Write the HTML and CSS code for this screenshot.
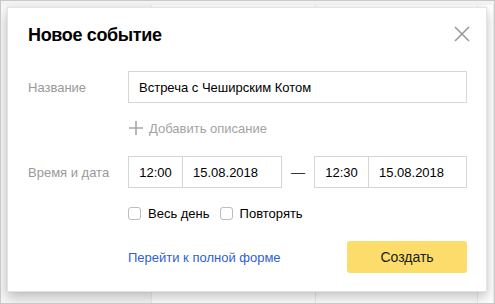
FILE: index.html
```html
<!DOCTYPE html>
<html lang="ru">
<head>
<meta charset="utf-8">
<link rel="stylesheet" href="styles.css">
</head>
<body>
<div class="screen">
  <div class="backdrop">
    <div class="col c1"></div>
    <div class="col c2"></div>
    <div class="col c3"></div>
    <div class="col c4"></div>
  </div>
  <div class="modal">
    <div class="modal-head">
      <h1 class="title">Новое событие</h1>
      <button class="close" aria-label="Закрыть">
        <svg width="16" height="16" viewBox="0 0 16 16"><path d="M1 1L15 15M15 1L1 15" stroke="#9a9a9a" stroke-width="1.6" fill="none"/></svg>
      </button>
    </div>
    <div class="form">
      <div class="row row-name">
        <div class="label">Название</div>
        <div class="field input-wide">Встреча с Чеширским Котом</div>
      </div>
      <div class="row row-desc">
        <div class="label"></div>
        <div class="add-desc">
          <svg width="14" height="14" viewBox="0 0 14 14"><path d="M7 0V14M0 7H14" stroke="#a6a6a6" stroke-width="1.6" fill="none"/></svg>
          <span>Добавить описание</span>
        </div>
      </div>
      <div class="row row-time">
        <div class="label">Время и дата</div>
        <div class="range">
          <div class="pair">
            <div class="field time">12:00</div>
            <div class="field date">15.08.2018</div>
          </div>
          <div class="dash">—</div>
          <div class="pair">
            <div class="field time">12:30</div>
            <div class="field date">15.08.2018</div>
          </div>
        </div>
      </div>
      <div class="row row-checks">
        <div class="label"></div>
        <div class="checks">
          <label class="check"><span class="box"></span>Весь день</label>
          <label class="check"><span class="box"></span>Повторять</label>
        </div>
      </div>
      <div class="row row-foot">
        <div class="label"></div>
        <div class="foot">
          <a class="link" href="#">Перейти к полной форме</a>
          <button class="create">Создать</button>
        </div>
      </div>
    </div>
  </div>
</div>
</body>
</html>
```

FILE: styles.css
```css
* { box-sizing: border-box; }
html, body { margin: 0; padding: 0; }
body {
  width: 495px;
  height: 304px;
  overflow: hidden;
  font-family: "Liberation Sans", Arial, sans-serif;
  background: #fff;
}
.screen {
  position: relative;
  width: 495px;
  height: 304px;
  border: 1px solid #c9c9c9;
  background: #fff;
  overflow: hidden;
}
.backdrop {
  position: absolute;
  inset: 0;
  display: flex;
  border-top: 4px solid #f4f4f4;
}
.col { height: 100%; border-right: 1px solid #ececec; }
.c1 { width: 151px; background: #f7f7f7; }
.c2 { width: 164px; }
.c3 { width: 162px; }
.c4 { flex: 1; }
.modal {
  position: absolute;
  left: 6px;
  top: 6px;
  width: 480px;
  height: 285px;
  background: #fff;
  border: 1px solid #e4e4e4;
  box-shadow: 0 6px 12px rgba(0,0,0,0.22), 0 0 3px rgba(0,0,0,0.08);
  padding: 16px 19px 0 20px;
}
.modal-head {
  display: flex;
  justify-content: space-between;
  align-items: center;
  height: 22px;
}
.title {
  margin: 0;
  font-size: 18px;
  letter-spacing: -0.35px;
  font-weight: bold;
  line-height: 22px;
  color: #000;
}
.close {
  border: 0;
  background: none;
  padding: 0;
  margin-right: -3px;
  margin-top: -2px;
  width: 16px;
  height: 16px;
  display: flex;
}
.form { margin-top: 25px; }
.row { display: flex; align-items: center; }
.label {
  width: 100px;
  flex: none;
  font-size: 13px;
  color: #999;
}
.field {
  height: 32px;
  border: 1px solid #d6d6d6;
  display: flex;
  align-items: center;
  font-size: 13px;
  color: #000;
  background: #fff;
}
.input-wide { width: 340px; padding-left: 10px; }
.row-desc { margin-top: 15px; height: 20px; }
.add-desc {
  display: flex;
  align-items: center;
  gap: 6px;
  color: #a3a3a3;
  font-size: 13px;
  margin-left: 1px;
}
.row-time { margin-top: 18px; }
.range { display: flex; align-items: center; }
.pair { display: flex; }
.time { width: 55px; justify-content: center; }
.date { width: 100px; margin-left: -1px; padding-left: 10px; }
.dash {
  width: 32px;
  text-align: center;
  font-size: 14px;
  color: #333;
}
.dash + .pair .date { width: 99px; }
.row-checks { margin-top: 16px; height: 18px; }
.checks { display: flex; gap: 10px; }
.check {
  display: flex;
  align-items: center;
  font-size: 13px;
  color: #000;
}
.box {
  width: 13px;
  height: 13px;
  border: 1px solid #bdbdbd;
  border-radius: 3px;
  margin-right: 7px;
  background: #fff;
}
.row-foot { margin-top: 19px; }
.foot {
  width: 340px;
  display: flex;
  align-items: center;
  justify-content: space-between;
}
.link {
  color: #2e5fd1;
  text-decoration: none;
  font-size: 13px;
}
.create {
  width: 120px;
  height: 32px;
  border: 0;
  border-radius: 3px;
  background: #fcdc6a;
  font-family: "Liberation Sans", Arial, sans-serif;
  font-size: 14px;
  color: #1a1a1a;
}
```
